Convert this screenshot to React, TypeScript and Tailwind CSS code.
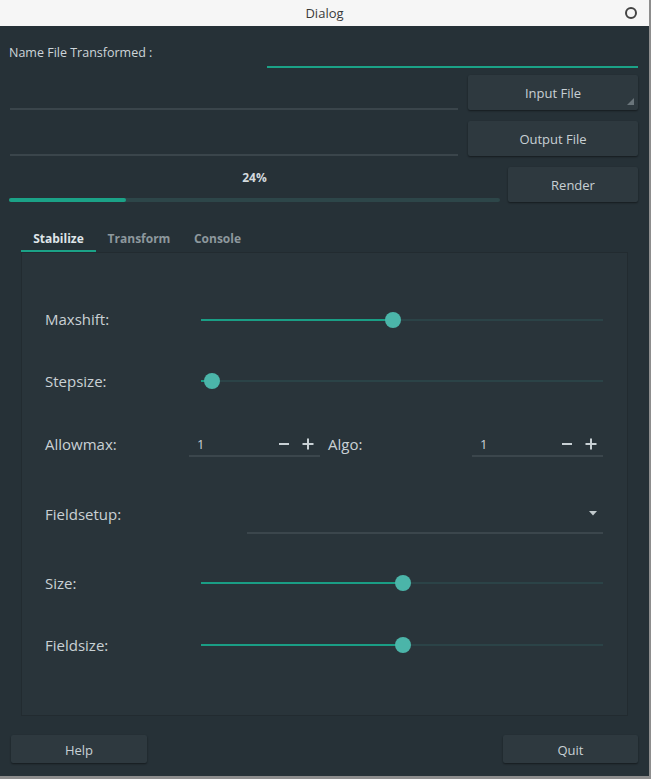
import React from "react";

const font = { fontFamily: '"Open Sans", "Noto Sans", "Liberation Sans", sans-serif' };

function Button({ label, w, h, pt, children }: { label: string; w: string; h: string; pt: string; children?: React.ReactNode }) {
  return (
    <div
      className={`relative ${w} ${h} ${pt} shrink-0 flex items-center justify-center rounded-[2px] bg-[#2e393f] text-[13px] text-[#c8d0d4] shadow-[0_1px_2px_rgba(0,0,0,0.45)]`}
    >
      {label}
      {children}
    </div>
  );
}

function Slider({ pct }: { pct: number }) {
  return (
    <div className="relative flex-1 h-[16px] flex items-center">
      <div className="w-full h-[2px] bg-[#2b4347]" />
      <div className="absolute left-0 top-[7px] h-[2px] bg-[#1a9e85]" style={{ width: `${pct}%` }} />
      <div
        className="absolute top-0 w-[16px] h-[16px] rounded-full bg-[#4bb5a9]"
        style={{ left: `calc(${pct}% - 8px)` }}
      />
    </div>
  );
}

function Spin() {
  return (
    <div className="w-[131px] h-[24px] shrink-0 border-b-2 border-[#3b464c] flex items-center pl-[8px] pr-[6px] text-[13px] text-[#c8d0d4]">
      <span className="flex-1 pt-[1px]">1</span>
      <svg width="12" height="12" viewBox="0 0 12 12" className="mr-[12px]">
        <rect x="1" y="5" width="10" height="2" fill="#c8d0d4" />
      </svg>
      <svg width="12" height="12" viewBox="0 0 12 12">
        <rect x="0.5" y="5" width="11" height="2" fill="#c8d0d4" />
        <rect x="5" y="0.5" width="2" height="11" fill="#c8d0d4" />
      </svg>
    </div>
  );
}

export default function App() {
  return (
    <div className="w-[651px] h-[779px] flex flex-col bg-[#8d8d8d] overflow-hidden" style={font}>
      <div className="w-[649px] flex-1 flex flex-col">
        {/* title bar */}
        <div className="relative h-[26px] shrink-0 bg-[#f6f6f6] flex items-center justify-center pt-[2px] text-[13px] text-[#3a3a3a]">
          Dialog
          <div className="absolute right-[12px] top-[7px] w-[12px] h-[12px] rounded-full border-2 border-[#444]" />
        </div>

        {/* body */}
        <div className="flex-1 bg-[#263137] flex flex-col pl-[9px] pr-[11px]">
          {/* row 1 */}
          <div className="flex h-[44px]">
            <div className="w-[258px] pt-[18px] text-[12.5px] text-[#cdd5d9] leading-[18px]">Name File Transformed :</div>
            <div className="flex-1 h-[42px] border-b-2 border-[#1ba287]" />
          </div>

          {/* row 2 */}
          <div className="flex mt-[5px]">
            <div className="ml-[1px] w-[448px] h-[35px] border-b-2 border-[#3a454b]" />
            <div className="ml-[10px]">
              <Button label="Input File" w="w-[170px]" h="h-[35px]" pt="pt-[2px]">
                <svg className="absolute right-[4px] bottom-[5px]" width="7" height="7" viewBox="0 0 7 7">
                  <polygon points="7,0 7,7 0,7" fill="#6a757b" />
                </svg>
              </Button>
            </div>
          </div>

          {/* row 3 */}
          <div className="flex mt-[11px]">
            <div className="ml-[1px] w-[448px] h-[35px] border-b-2 border-[#3a454b]" />
            <div className="ml-[10px]">
              <Button label="Output File" w="w-[170px]" h="h-[35px]" pt="pt-[2px]" />
            </div>
          </div>

          {/* row 4 */}
          <div className="flex mt-[11px]">
            <div className="w-[491px] h-[35px] flex flex-col">
              <div className="h-[22px] flex items-center justify-center text-[12px] font-bold text-[#d3dade]">24%</div>
              <div className="mt-auto h-[4px] rounded-full bg-[#2d4649] relative">
                <div className="absolute left-0 top-0 h-[4px] w-[117px] rounded-full bg-[#1ba287]" />
              </div>
            </div>
            <div className="ml-[8px]">
              <Button label="Render" w="w-[130px]" h="h-[35px]" pt="pt-[2px]" />
            </div>
          </div>

          {/* tabs */}
          <div className="ml-[12px] mt-[24px] flex h-[26px] text-[12px] font-bold">
            <div className="w-[75px] flex items-center justify-center pt-[1px] border-b-2 border-[#1ba287] text-[#dfe5e8]">Stabilize</div>
            <div className="w-[86px] flex items-center justify-center pb-[1px] text-[#8d989d]">Transform</div>
            <div className="w-[71px] flex items-center justify-center pb-[1px] text-[#8d989d]">Console</div>
          </div>

          {/* panel */}
          <div className="ml-[12px] w-[607px] h-[464px] border border-[#222b30] bg-[#29343a] flex flex-col pl-[23px] pr-[24px] text-[15px] text-[#c9d1d5]">
            <div className="mt-[47px] h-[40px] flex items-center">
              <div className="w-[156px] pb-[2px]">Maxshift:</div>
              <Slider pct={47.8} />
            </div>
            <div className="mt-[21px] h-[40px] flex items-center">
              <div className="w-[156px]">Stepsize:</div>
              <Slider pct={2.7} />
            </div>
            <div className="mt-[24px] h-[40px] flex items-center">
              <div className="w-[144px] shrink-0 pb-[2px]">Allowmax:</div>
              <Spin />
              <div className="ml-[8px] w-[144px] shrink-0 pb-[2px]">Algo:</div>
              <Spin />
            </div>
            <div className="mt-[29px] h-[40px] flex items-center">
              <div className="w-[202px] shrink-0 pt-[1px]">Fieldsetup:</div>
              <div className="flex-1 h-[40px] border-b-2 border-[#3b464c] flex items-center justify-end pr-[6px]">
                <svg width="8" height="6" viewBox="0 0 8 6">
                  <polygon points="0,1 8,1 4,5.5" fill="#c2cacd" />
                </svg>
              </div>
            </div>
            <div className="mt-[29px] h-[40px] flex items-center">
              <div className="w-[156px]">Size:</div>
              <Slider pct={50.2} />
            </div>
            <div className="mt-[22px] h-[40px] flex items-center">
              <div className="w-[156px]">Fieldsize:</div>
              <Slider pct={50.2} />
            </div>
          </div>

          {/* bottom buttons */}
          <div className="mt-[19px] flex justify-between">
            <div className="ml-[2px]">
              <Button label="Help" w="w-[136px]" h="h-[28px]" pt="pt-[3px]" />
            </div>
            <Button label="Quit" w="w-[135px]" h="h-[28px]" pt="pt-[3px]" />
          </div>
        </div>
      </div>
      <div className="h-[3px] shrink-0" />
    </div>
  );
}
